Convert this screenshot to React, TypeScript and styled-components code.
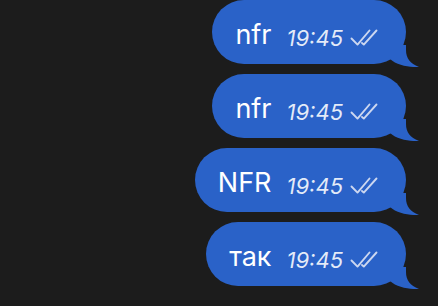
import React from "react";
import styled, { createGlobalStyle } from "styled-components";

const Global = createGlobalStyle`
  html, body {
    margin: 0;
    padding: 0;
    background: #1c1c1c;
  }
  body {
    font-family: Inter, "Noto Sans", sans-serif;
  }
`;

const Thread = styled.div`
  display: flex;
  flex-direction: column;
  align-items: flex-end;
  gap: 10px;
  padding: 0 32px 0 0;
  width: 438px;
  height: 306px;
  box-sizing: border-box;
  overflow: hidden;
  background: #1c1c1c;
`;

const Bubble = styled.div`
  position: relative;
  display: flex;
  align-items: center;
  height: 64px;
  box-sizing: border-box;
  padding: 0 27px 0 23px;
  border-radius: 32px;
  background: #2a62c8;
  color: #ffffff;
`;

const Text = styled.span`
  font-size: 27px;
  line-height: 1;
  font-weight: 400;
  margin-top: 4px;
`;

const Time = styled.span`
  margin: 12px 0 0 15px;
  font-size: 22px;
  line-height: 1;
  font-style: italic;
  color: rgba(255, 255, 255, 0.88);
`;

const Checks = styled.svg`
  margin: 11px 0 0 7px;
  width: 29px;
  height: 17px;
  flex: none;
`;

const Tail = styled.svg`
  position: absolute;
  right: -13px;
  bottom: -3px;
  width: 30px;
  height: 22px;
`;

const DoubleCheck = () => (
  <Checks viewBox="0 0 29 17" fill="none">
    <path
      d="M1.5 9.5 L7.5 15.6 L19.5 1.5"
      stroke="#ccd7f0"
      strokeWidth="1.9"
      strokeLinecap="round"
      strokeLinejoin="round"
    />
    <path
      d="M12 14 L13.8 15.6 L26.5 1.5"
      stroke="#ccd7f0"
      strokeWidth="1.9"
      strokeLinecap="round"
      strokeLinejoin="round"
    />
  </Checks>
);

const TailShape = () => (
  <Tail viewBox="0 0 30 22">
    <path d="M1 0 L17 0 L17 5 C17 13 21 18.5 30 22 C21 22.5 8 20.5 1 14 Z" fill="#2a62c8" />
  </Tail>
);

const messages = ["nfr", "nfr", "NFR", "так"];

export default function App() {
  return (
    <>
      <Global />
      <Thread>
        {messages.map((m, i) => (
          <Bubble key={i}>
            <Text>{m}</Text>
            <Time>19:45</Time>
            <DoubleCheck />
            <TailShape />
          </Bubble>
        ))}
      </Thread>
    </>
  );
}
